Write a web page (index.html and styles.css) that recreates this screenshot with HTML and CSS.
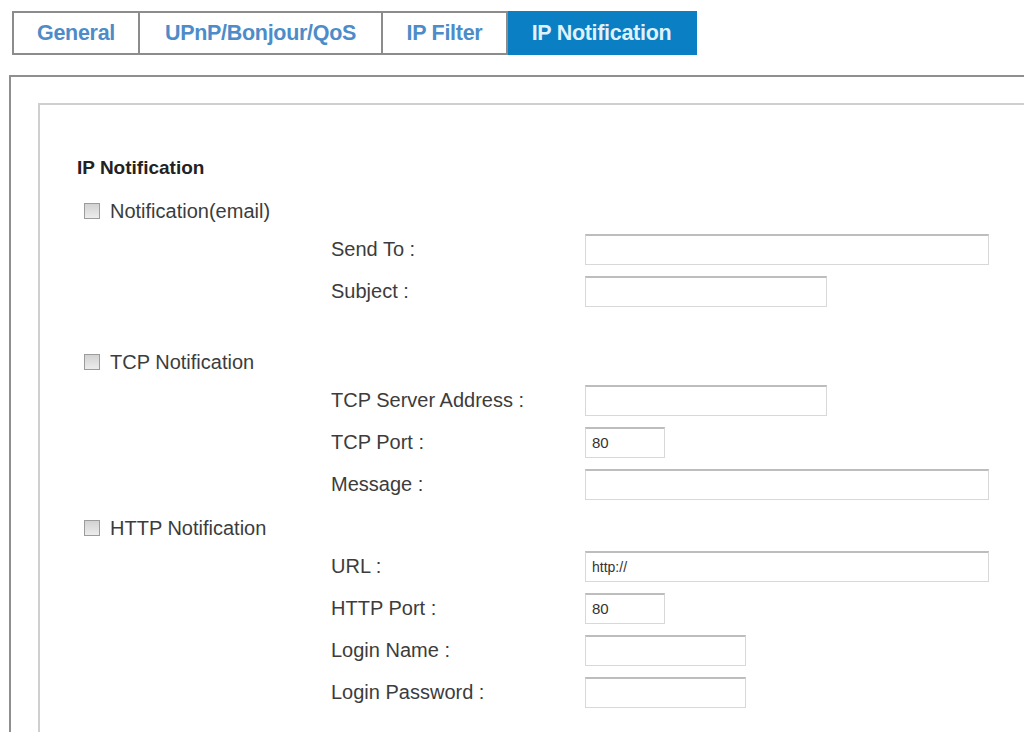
FILE: index.html
```html
<!DOCTYPE html>
<html lang="en">
<head>
  <meta charset="UTF-8">
  <meta name="viewport" content="width=device-width, initial-scale=1.0">
  <title>IP Notification</title>
  <link rel="stylesheet" href="styles.css">
</head>
<body>

  <div class="tabs">
    <div class="tab tab-general">General</div>
    <div class="tab tab-upnp">UPnP/Bonjour/QoS</div>
    <div class="tab tab-filter">IP Filter</div>
    <div class="tab tab-notify active">IP Notification</div>
  </div>

  <div class="outer-panel">
    <div class="inner-panel">
      <div class="heading">IP Notification</div>

      <div class="section section-email">
        <label class="check-row"><span class="check"></span>Notification(email)</label>
        <div class="field"><span class="label">Send To :</span><input class="input wide" type="text"></div>
        <div class="field"><span class="label">Subject :</span><input class="input medium" type="text"></div>
      </div>

      <div class="section section-tcp">
        <label class="check-row"><span class="check"></span>TCP Notification</label>
        <div class="field"><span class="label">TCP Server Address :</span><input class="input medium" type="text"></div>
        <div class="field"><span class="label">TCP Port :</span><input class="input port" type="text" value="80"></div>
        <div class="field"><span class="label">Message :</span><input class="input wide" type="text"></div>
      </div>

      <div class="section">
        <label class="check-row"><span class="check"></span>HTTP Notification</label>
        <div class="field"><span class="label">URL :</span><input class="input wide url" type="text" value="http://"></div>
        <div class="field"><span class="label">HTTP Port :</span><input class="input port" type="text" value="80"></div>
        <div class="field"><span class="label">Login Name :</span><input class="input login" type="text"></div>
        <div class="field"><span class="label">Login Password :</span><input class="input login" type="password"></div>
      </div>
    </div>
  </div>

</body>
</html>
```

FILE: styles.css
```css
body {
  margin: 0;
  padding: 0;
  height: 732px;
  background-color: #fff;
  font-family: 'Liberation Sans', Arial, sans-serif;
  color: #3a3a3a;
  overflow: hidden;
}
.tabs {
  display: flex;
  margin: 11px 0 0 12px;
  height: 44px;
}
.tab {
  box-sizing: border-box;
  height: 44px;
  display: flex;
  align-items: center;
  justify-content: center;
  font-size: 21.5px;
  font-weight: bold;
  letter-spacing: -0.3px;
  color: #4d8cc8;
  border: 2px solid #8c8c8c;
  border-left: none;
  background-color: #fff;
}
.tab-general {
  width: 128px;
  border-left: 2px solid #8c8c8c;
}
.tab-upnp {
  width: 243px;
}
.tab-filter {
  width: 125px;
}
.tab-notify {
  width: 189px;
}
.tab.active {
  background-color: #0b7fc3;
  border-color: #0b7fc3;
  color: #dff1fb;
}
.outer-panel {
  box-sizing: border-box;
  margin: 20px 0 0 9px;
  height: 657px;
  border-top: 2px solid #8f8f8f;
  border-left: 2px solid #8f8f8f;
  padding: 26px 0 0 27px;
}
.inner-panel {
  box-sizing: border-box;
  height: 629px;
  border-top: 2px solid #cdd0cd;
  border-left: 2px solid #cdd0cd;
  padding: 51px 0 0 37px;
}
.heading {
  font-size: 19px;
  font-weight: bold;
  color: #222;
  line-height: 24px;
  margin-bottom: 14px;
}
.section-email {
  margin-bottom: 33px;
}
.section-tcp {
  margin-bottom: 6px;
}
.check-row {
  display: flex;
  align-items: center;
  height: 34px;
  font-size: 20px;
  color: #3c3c3c;
  padding-left: 7px;
}
.check {
  box-sizing: border-box;
  width: 16px;
  height: 16px;
  border: 1px solid #9c9c9c;
  background: linear-gradient(#d2d2d2, #ececec);
  margin-right: 10px;
}
.field {
  display: flex;
  align-items: center;
  height: 42px;
  padding-left: 254px;
}
.label {
  width: 254px;
  font-size: 20px;
  color: #3c3c3c;
}
.input {
  box-sizing: border-box;
  height: 31px;
  margin: 0;
  padding: 0 6px;
  border: 1px solid #d8d8d8;
  border-top: 2px solid #bdbdbd;
  background-color: #fff;
  font-family: 'Liberation Sans', Arial, sans-serif;
  font-size: 15px;
  color: #333;
}
.url {
  font-size: 14px;
}
.wide {
  width: 404px;
}
.medium {
  width: 242px;
}
.port {
  width: 80px;
}
.login {
  width: 161px;
}
```
